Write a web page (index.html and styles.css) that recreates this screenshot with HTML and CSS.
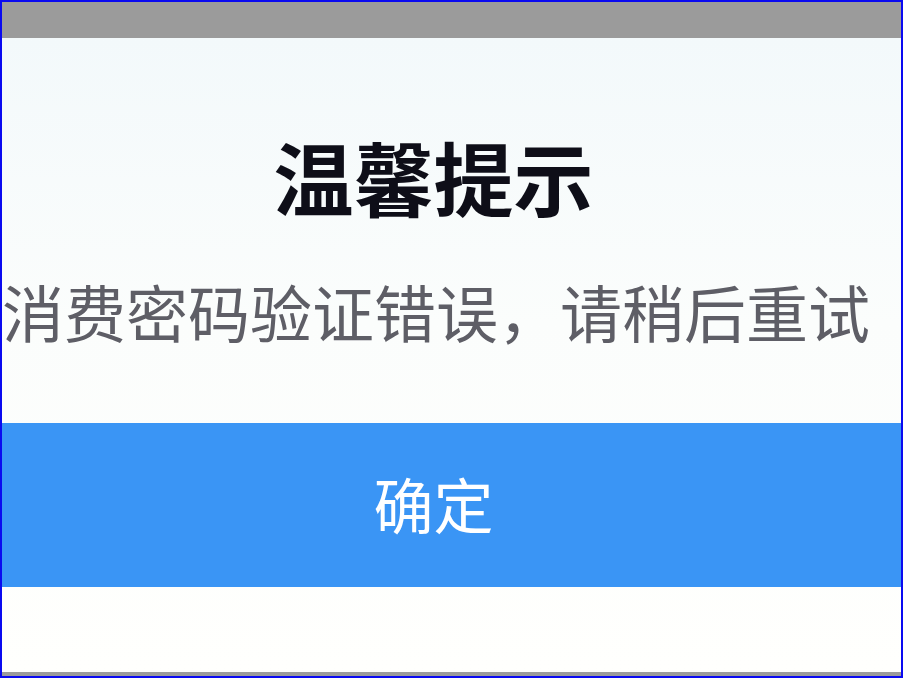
FILE: index.html
```html
<!DOCTYPE html>
<html lang="zh-CN">
<head>
  <meta charset="UTF-8">
  <meta name="viewport" content="width=device-width, initial-scale=1.0">
  <title>温馨提示</title>
  <link rel="stylesheet" href="styles.css">
</head>
<body>
  <div class="frame">
    <div class="shade-top"></div>

    <div class="dialog">
      <div class="dialog-title">温馨提示</div>
      <div class="dialog-message">消费密码验证错误，请稍后重试</div>
      <button class="dialog-button">确定</button>
      <div class="dialog-foot"></div>
    </div>

    <div class="shade-bottom"></div>
  </div>
</body>
</html>
```

FILE: styles.css
```css
:root {
  --frame-blue: #0a0af0;
  --shade: #9b9b9b;
  --title-color: #0e0e18;
  --text-gray: #5e5e66;
  --button-blue: #3a95f5;
}

html, body {
  margin: 0;
  padding: 0;
  height: 100%;
}

body {
  font-family: "Noto Sans CJK SC", "Noto Sans", sans-serif;
  background: var(--frame-blue);
}

.frame {
  box-sizing: border-box;
  height: 100%;
  border: 2px solid var(--frame-blue);
  display: flex;
  flex-direction: column;
  overflow: hidden;
}

.shade-top {
  height: 36px;
  flex-shrink: 0;
  background: var(--shade);
}

.shade-bottom {
  height: 4px;
  flex-shrink: 0;
  background: var(--shade);
}

.dialog {
  flex-grow: 1;
  display: flex;
  flex-direction: column;
  background: linear-gradient(#f3f9fb, #fbfdfc 45%, #fffffd);
}

.dialog-title {
  padding: 89px 36px 0 0;
  height: 96px;
  line-height: 96px;
  font-size: 80px;
  font-weight: 700;
  text-align: center;
  color: var(--title-color);
}

.dialog-message {
  margin-top: 48px;
  padding-right: 34px;
  height: 80px;
  line-height: 80px;
  font-size: 62px;
  text-align: center;
  white-space: nowrap;
  color: var(--text-gray);
}

.dialog-button {
  margin-top: 72px;
  height: 164px;
  padding: 0 36px 6px 0;
  border: none;
  background: var(--button-blue);
  color: #fff;
  font-family: inherit;
  font-size: 60px;
  cursor: pointer;
}

.dialog-foot {
  flex-grow: 1;
}
```
